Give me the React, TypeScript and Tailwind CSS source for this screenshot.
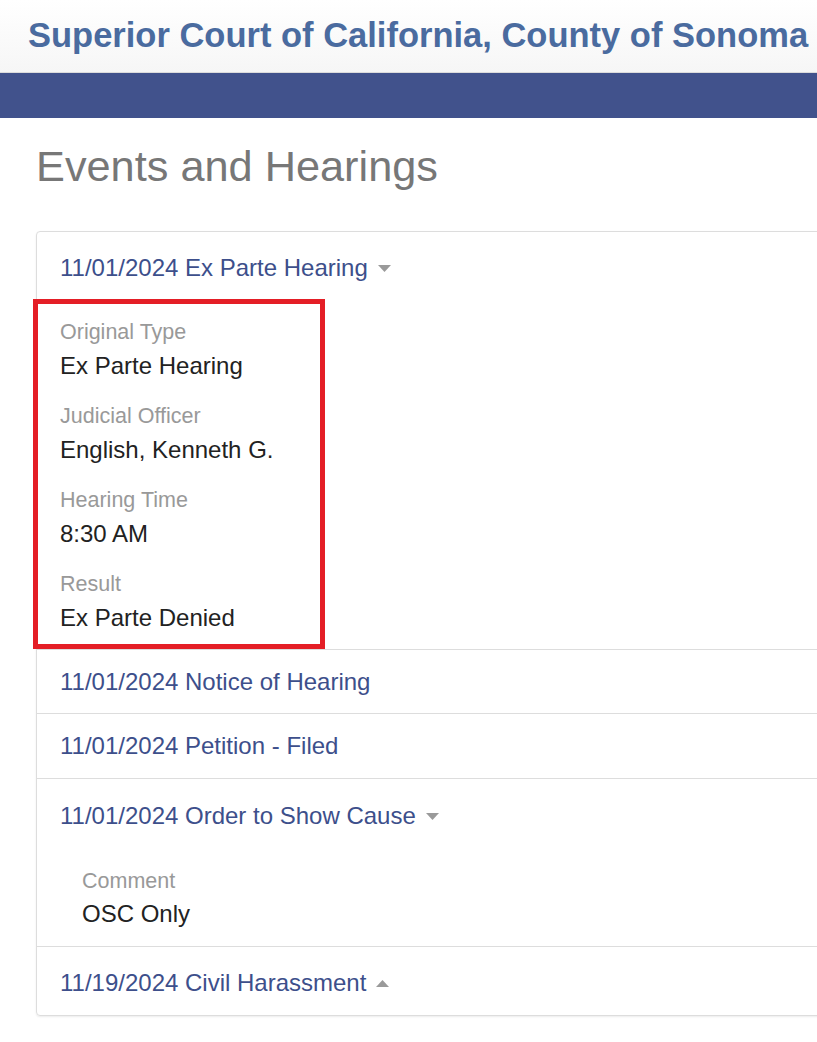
import React from "react";

function Caret({ up = false }: { up?: boolean }) {
  return (
    <svg width="13" height="7" viewBox="0 0 13 7" className="ml-[10px] inline-block" aria-hidden>
      {up ? <path d="M0 7 L6.5 0 L13 7 Z" fill="#9a9a9a" /> : <path d="M0 0 L13 0 L6.5 7 Z" fill="#9a9a9a" />}
    </svg>
  );
}

function Pair({ label, value, last = false }: { label: string; value: string; last?: boolean }) {
  return (
    <div className={last ? "" : "mb-[23px]"}>
      <div className="text-[21.5px] leading-[26px] text-[#999999]">{label}</div>
      <div className="mt-[7px] text-[24px] leading-[28px] text-[#222222]">{value}</div>
    </div>
  );
}

function RowHead({ text, caret }: { text: string; caret?: "up" | "down" }) {
  return (
    <div className="flex items-center text-[24px] leading-[28px] text-[#3d4f8b]">
      <span>{text}</span>
      {caret && <Caret up={caret === "up"} />}
    </div>
  );
}

export default function App() {
  return (
    <div className="w-[817px] min-h-[1042px] overflow-hidden bg-white" style={{ fontFamily: '"Liberation Sans", Arial, sans-serif' }}>
      <header className="h-[73px] border-b border-[#dcdcdc] bg-gradient-to-b from-white to-[#f6f6f6] pl-[28px] pt-[14px]">
        <h1 className="whitespace-nowrap text-[34.5px] font-bold leading-[42px] text-[#4a6b9f]">
          Superior Court of California, County of Sonoma
        </h1>
      </header>
      <div className="h-[45px] bg-[#41528c]" />
      <main className="pl-[36px]">
        <h2 className="mt-[23px] text-[43.3px] leading-[50px] text-[#777777]">Events and Hearings</h2>
        <div className="mt-[40px] w-[1000px] rounded-[4px] border border-[#dddddd] shadow-[0_1px_2px_rgba(0,0,0,0.08)]">
          <div className="relative px-[23px] pb-[17px] pt-[22px]">
            <RowHead text="11/01/2024 Ex Parte Hearing" caret="down" />
            <div className="mt-[37px]">
              <Pair label="Original Type" value="Ex Parte Hearing" />
              <Pair label="Judicial Officer" value="English, Kenneth G." />
              <Pair label="Hearing Time" value="8:30 AM" />
              <Pair label="Result" value="Ex Parte Denied" last />
            </div>
            <div className="pointer-events-none absolute left-[-4px] top-[67px] h-[350px] w-[292px] border-[5px] border-[#e41e26]" />
          </div>
          <div className="border-t border-[#dddddd] px-[23px] pb-[17px] pt-[18px]">
            <RowHead text="11/01/2024 Notice of Hearing" />
          </div>
          <div className="border-t border-[#dddddd] px-[23px] pb-[18px] pt-[18px]">
            <RowHead text="11/01/2024 Petition - Filed" />
          </div>
          <div className="border-t border-[#dddddd] px-[23px] pb-[18px] pt-[23px]">
            <RowHead text="11/01/2024 Order to Show Cause" caret="down" />
            <div className="mt-[38px] pl-[22px]">
              <div className="text-[21.5px] leading-[26px] text-[#999999]">Comment</div>
              <div className="mt-[6px] text-[24px] leading-[28px] text-[#222222]">OSC Only</div>
            </div>
          </div>
          <div className="border-t border-[#dddddd] px-[23px] pb-[18px] pt-[22px]">
            <RowHead text="11/19/2024 Civil Harassment" caret="up" />
          </div>
        </div>
      </main>
    </div>
  );
}
